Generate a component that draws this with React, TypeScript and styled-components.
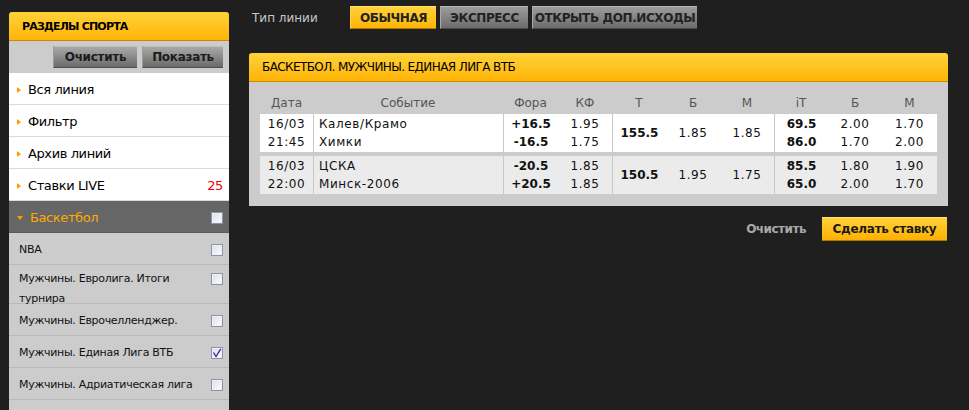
import styled, { createGlobalStyle } from "styled-components"

const GlobalStyle = createGlobalStyle`
  html, body {
    margin: 0;
    padding: 0;
    background: #1f1f1f;
    font-family: "DejaVu Sans", Verdana, sans-serif;
    font-size: 12px;
    color: #111;
  }
`

const Page = styled.div`
  display: flex;
  align-items: flex-start;
  width: 969px;
  height: 410px;
  overflow: hidden;
`

const Sidebar = styled.div`
  width: 220px;
  margin: 12px 0 0 9px;
  flex-shrink: 0;
`

const YellowHead = styled.div`
  height: 28px;
  display: flex;
  align-items: center;
  background: linear-gradient(#ffd23a, #ffb406);
  border-bottom: 1px solid #c98a00;
  border-radius: 3px 3px 0 0;
  color: #000;
`

const SideTitle = styled(YellowHead)`
  padding-left: 13px;
  font-size: 11px;
  font-weight: bold;
  letter-spacing: -0.8px;
`

const Toolbar = styled.div`
  height: 32px;
  background: #cccccc;
  display: flex;
  justify-content: flex-end;
  align-items: center;
  gap: 5px;
  padding-right: 6px;
`

const GrayButton = styled.div<{ $w: number }>`
  width: ${(p) => p.$w}px;
  height: 22px;
  display: flex;
  align-items: center;
  justify-content: center;
  background: linear-gradient(#a9a9a9, #6a6a6a);
  border-top: 1px solid #bdbdbd;
  border-left: 1px solid #9a9a9a;
  border-bottom: 1px solid #505050;
  box-sizing: border-box;
  font-weight: bold;
  font-size: 12px;
  letter-spacing: -0.3px;
  color: #1c1c1c;
`

const MenuItem = styled.div<{ $active?: boolean }>`
  height: 29px;
  padding: 2px 6px 0 8px;
  display: flex;
  align-items: center;
  border-bottom: 1px solid ${(p) => (p.$active ? "#5a5a5a" : "#dcdcdc")};
  background: ${(p) => (p.$active ? "#666666" : "#ffffff")};
  color: ${(p) => (p.$active ? "#ffaa00" : "#000")};
  font-size: 13px;
  letter-spacing: -0.4px;
`

const Arrow = styled.span<{ $down?: boolean }>`
  width: 0;
  height: 0;
  margin-right: 7px;
  ${(p) =>
    p.$down
      ? `border-left: 3px solid transparent; border-right: 3px solid transparent; border-top: 4px solid #f5a000;`
      : `border-top: 3px solid transparent; border-bottom: 3px solid transparent; border-left: 4px solid #f5a000;`}
`

const Label = styled.span`
  flex: 1;
`

const Count = styled.span`
  color: #ee0000;
  font-size: 13px;
`

const SubItem = styled.div<{ $tall?: boolean }>`
  display: flex;
  align-items: flex-start;
  padding: ${(p) => (p.$tall ? "4px" : "2px")} 6px 0 10px;
  box-sizing: border-box;
  background: #cccccc;
  border-bottom: 1px solid #b9b9b9;
  font-size: 11px;
  letter-spacing: -0.3px;
  line-height: ${(p) => (p.$tall ? "20px" : "29px")};
  height: ${(p) => (p.$tall ? "39px" : "32px")};
`

const SubLabel = styled.span`
  flex: 1;
  padding-right: 10px;
`

const BoxWrap = styled.span<{ $tall?: boolean }>`
  display: flex;
  align-items: center;
  height: ${(p) => (p.$tall ? "20px" : "29px")};
`

const Box = styled.span`
  width: 12px;
  height: 12px;
  box-sizing: border-box;
  border: 1px solid #8b93ad;
  background: linear-gradient(135deg, #dcdde2, #ffffff);
  box-shadow: inset 0 0 0 1px #f0f0f4;
  display: flex;
  align-items: center;
  justify-content: center;
`

const Checkbox = ({ checked }: { checked?: boolean }) => (
  <Box>
    {checked && (
      <svg width="10" height="10" viewBox="0 0 10 10">
        <path d="M1.5 4.5 L4 8.5 L8.8 0.8" stroke="#3c2fa0" strokeWidth="1.4" fill="none" />
      </svg>
    )}
  </Box>
)

const Main = styled.div`
  margin-left: 20px;
  width: 699px;
`

const TypeRow = styled.div`
  display: flex;
  align-items: center;
  height: 23px;
  margin-top: 6px;
`

const TypeLabel = styled.span`
  color: #c8c8c8;
  font-size: 12px;
  width: 98px;
  padding-left: 3px;
`

const TypeButton = styled.div<{ $w: number; $on?: boolean }>`
  width: ${(p) => p.$w}px;
  height: 23px;
  margin-right: 4px;
  box-sizing: border-box;
  display: flex;
  align-items: center;
  justify-content: center;
  white-space: nowrap;
  font-weight: bold;
  font-size: 12px;
  letter-spacing: -0.4px;
  color: #222;
  background: ${(p) => (p.$on ? "linear-gradient(#ffd23a, #ffb406)" : "linear-gradient(#9c9c9c, #6c6c6c)")};
  border-top: 1px solid ${(p) => (p.$on ? "#ffe070" : "#b8b8b8")};
  border-left: 1px solid ${(p) => (p.$on ? "#ffd050" : "#aaaaaa")};
  border-bottom: 1px solid ${(p) => (p.$on ? "#b07800" : "#4a4a4a")};
`

const Panel = styled.div`
  margin-top: 24px;
`

const PanelTitle = styled(YellowHead)`
  padding-left: 13px;
  font-size: 12px;
  letter-spacing: -0.6px;
`

const PanelBody = styled.div`
  background: #cccccc;
  padding: 10px 11px 12px;
`

const cols = "53px 190px 55px 54px 54px 54px 54px 54px 54px 55px"

const HeadRow = styled.div`
  display: grid;
  grid-template-columns: ${cols};
  height: 22px;
  align-items: center;
  color: #555;
  font-size: 12px;
  text-align: center;
`

const BodyRow = styled.div<{ $alt?: boolean }>`
  display: grid;
  grid-template-columns: ${cols};
  height: 38px;
  background: ${(p) => (p.$alt ? "#ebebeb" : "#ffffff")};
  margin-bottom: 4px;
  font-size: 12px;
  &:last-child {
    margin-bottom: 0;
  }
`

const Cell = styled.div<{ $left?: boolean; $sep?: boolean; $bold?: boolean }>`
  display: flex;
  flex-direction: column;
  justify-content: center;
  align-items: ${(p) => (p.$left ? "flex-start" : "center")};
  padding-left: ${(p) => (p.$left ? "5px" : "0")};
  border-left: ${(p) => (p.$sep ? "1px solid #c8c8c8" : "none")};
  font-weight: ${(p) => (p.$bold ? "bold" : "normal")};
  line-height: 18px;
  letter-spacing: ${(p) => (p.$bold ? "0" : "0.6px")};
`

const HeadCell = styled.span`
  text-align: center;
`

const Actions = styled.div`
  display: flex;
  justify-content: flex-end;
  align-items: center;
  gap: 16px;
  margin-top: 11px;
  padding-right: 1px;
`

const TextLink = styled.span`
  color: #a8a8a8;
  font-weight: bold;
  font-size: 12px;
  letter-spacing: -0.5px;
`

const BetButton = styled.div`
  width: 125px;
  height: 24px;
  box-sizing: border-box;
  display: flex;
  align-items: center;
  justify-content: center;
  background: linear-gradient(#ffd23a, #ffb000);
  border-bottom: 1px solid #b07800;
  border-top: 1px solid #ffe070;
  font-weight: bold;
  font-size: 12px;
  letter-spacing: -0.3px;
  color: #1a1a1a;
`

const leagues = [
  { name: "NBA" },
  { name: "Мужчины. Евролига. Итоги турнира", tall: true },
  { name: "Мужчины. Еврочелленджер." },
  { name: "Мужчины. Единая Лига ВТБ", checked: true },
  { name: "Мужчины. Адриатическая лига" },
  { name: "" },
]

const games = [
  {
    date: ["16/03", "21:45"],
    teams: ["Калев/Крамо", "Химки"],
    fora: ["+16.5", "-16.5"],
    kf: ["1.95", "1.75"],
    total: "155.5",
    b: "1.85",
    m: "1.85",
    it: ["69.5", "86.0"],
    ib: ["2.00", "1.70"],
    im: ["1.70", "2.00"],
  },
  {
    date: ["16/03", "22:00"],
    teams: ["ЦСКА", "Минск-2006"],
    fora: ["-20.5", "+20.5"],
    kf: ["1.85", "1.85"],
    total: "150.5",
    b: "1.95",
    m: "1.75",
    it: ["85.5", "65.0"],
    ib: ["1.80", "2.00"],
    im: ["1.90", "1.70"],
  },
]

const Two = ({ v }: { v: string[] }) => (
  <>
    <span>{v[0]}</span>
    <span>{v[1]}</span>
  </>
)

export default function App() {
  return (
    <>
      <GlobalStyle />
      <Page>
        <Sidebar>
          <SideTitle>РАЗДЕЛЫ СПОРТА</SideTitle>
          <Toolbar>
            <GrayButton $w={84}>Очистить</GrayButton>
            <GrayButton $w={81}>Показать</GrayButton>
          </Toolbar>
          <MenuItem>
            <Arrow />
            <Label>Вся линия</Label>
          </MenuItem>
          <MenuItem>
            <Arrow />
            <Label>Фильтр</Label>
          </MenuItem>
          <MenuItem>
            <Arrow />
            <Label>Архив линий</Label>
          </MenuItem>
          <MenuItem>
            <Arrow />
            <Label>Ставки LIVE</Label>
            <Count>25</Count>
          </MenuItem>
          <MenuItem $active>
            <Arrow $down />
            <Label>Баскетбол</Label>
            <Checkbox />
          </MenuItem>
          {leagues.map((l, i) => (
            <SubItem key={i} $tall={l.tall}>
              <SubLabel>{l.name}</SubLabel>
              {l.name && (
                <BoxWrap $tall={l.tall}>
                  <Checkbox checked={l.checked} />
                </BoxWrap>
              )}
            </SubItem>
          ))}
        </Sidebar>
        <Main>
          <TypeRow>
            <TypeLabel>Тип линии</TypeLabel>
            <TypeButton $w={86} $on>
              ОБЫЧНАЯ
            </TypeButton>
            <TypeButton $w={88}>ЭКСПРЕСС</TypeButton>
            <TypeButton $w={165}>ОТКРЫТЬ ДОП.ИСХОДЫ</TypeButton>
          </TypeRow>
          <Panel>
            <PanelTitle>БАСКЕТБОЛ. МУЖЧИНЫ. ЕДИНАЯ ЛИГА ВТБ</PanelTitle>
            <PanelBody>
              <HeadRow>
                <HeadCell>Дата</HeadCell>
                <HeadCell>Событие</HeadCell>
                <HeadCell>Фора</HeadCell>
                <HeadCell>КФ</HeadCell>
                <HeadCell>Т</HeadCell>
                <HeadCell>Б</HeadCell>
                <HeadCell>М</HeadCell>
                <HeadCell>iT</HeadCell>
                <HeadCell>Б</HeadCell>
                <HeadCell>М</HeadCell>
              </HeadRow>
              {games.map((g, i) => (
                <BodyRow key={i} $alt={i % 2 === 1}>
                  <Cell>
                    <Two v={g.date} />
                  </Cell>
                  <Cell $left $sep>
                    <Two v={g.teams} />
                  </Cell>
                  <Cell $sep $bold>
                    <Two v={g.fora} />
                  </Cell>
                  <Cell>
                    <Two v={g.kf} />
                  </Cell>
                  <Cell $sep $bold>
                    {g.total}
                  </Cell>
                  <Cell>{g.b}</Cell>
                  <Cell>{g.m}</Cell>
                  <Cell $sep $bold>
                    <Two v={g.it} />
                  </Cell>
                  <Cell>
                    <Two v={g.ib} />
                  </Cell>
                  <Cell>
                    <Two v={g.im} />
                  </Cell>
                </BodyRow>
              ))}
            </PanelBody>
          </Panel>
          <Actions>
            <TextLink>Очистить</TextLink>
            <BetButton>Сделать ставку</BetButton>
          </Actions>
        </Main>
      </Page>
    </>
  )
}
